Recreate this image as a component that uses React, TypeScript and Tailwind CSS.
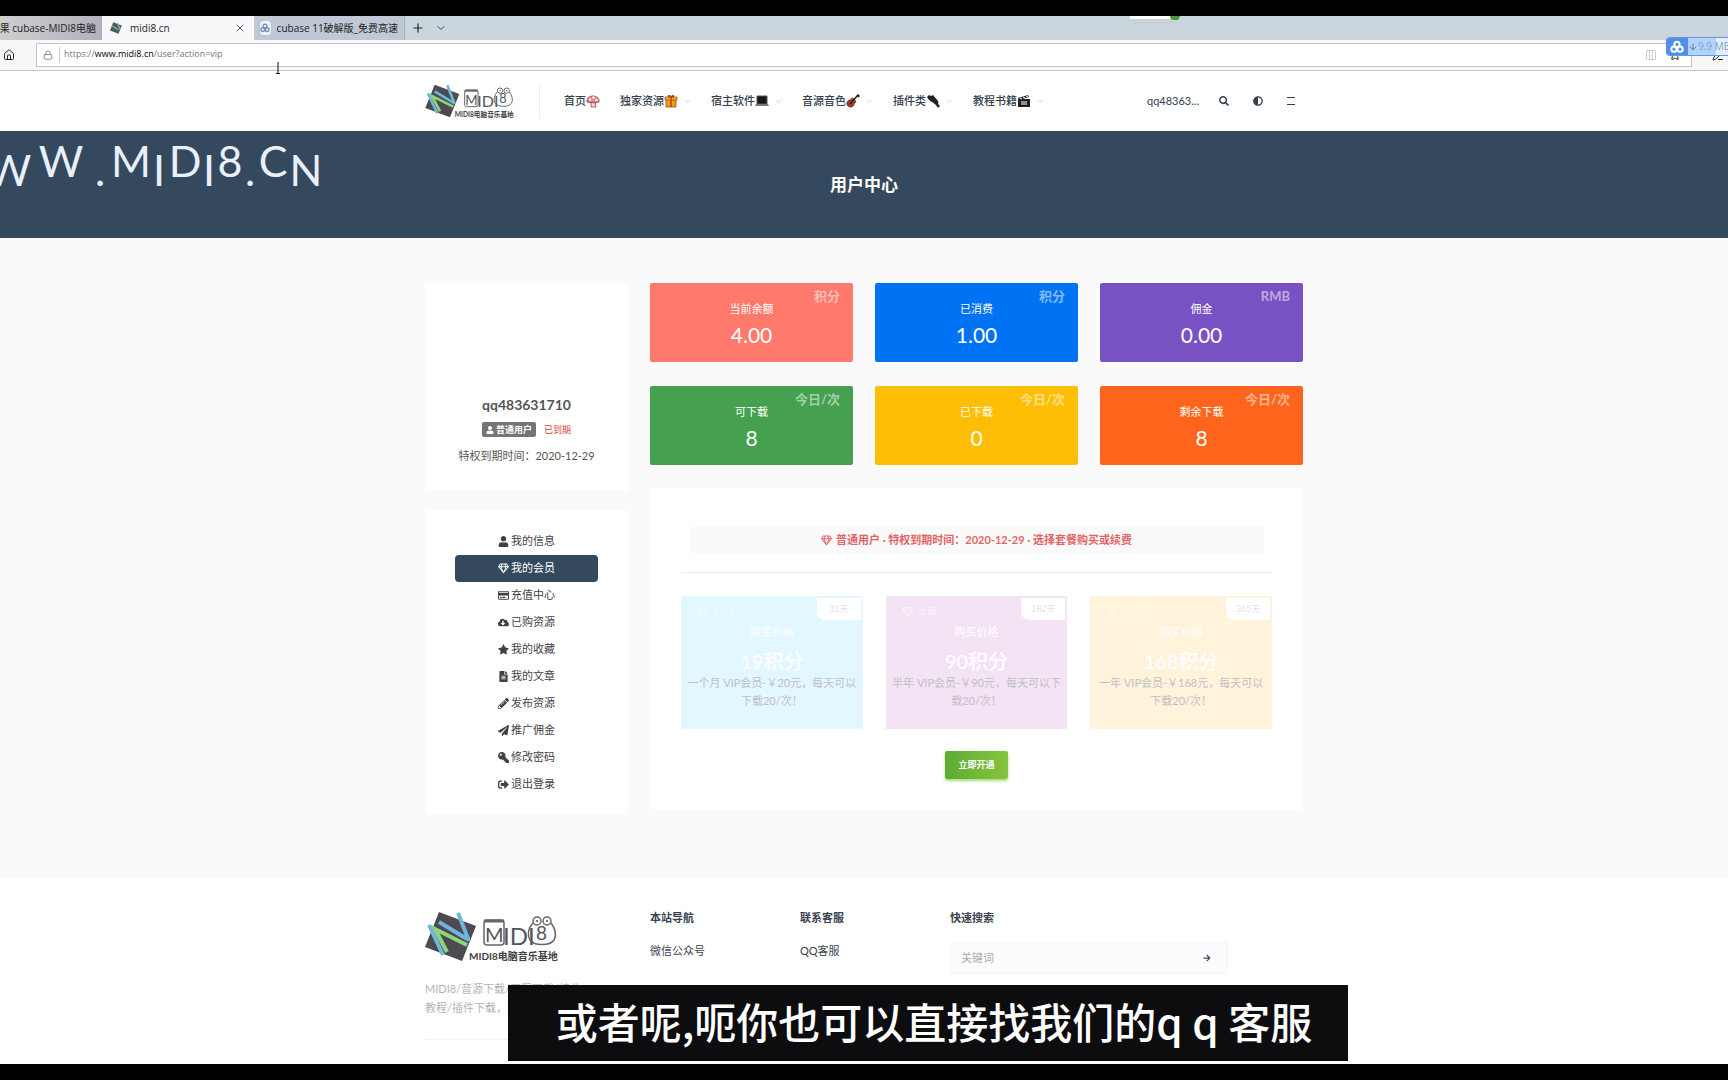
import type { ReactNode } from 'react';
import type { IconType } from 'react-icons';
import {
  FaAdjust,
  FaArrowRight,
  FaCloudDownloadAlt,
  FaFileAlt,
  FaKey,
  FaPaperPlane,
  FaPencilAlt,
  FaRegCreditCard,
  FaRegGem,
  FaSearch,
  FaSignOutAlt,
  FaStar,
  FaUser,
} from 'react-icons/fa';
import { ArrowDown, ChevronDown, Columns3, House, Lock, PenLine, Plus, Star, X } from 'lucide-react';
import clsx from 'clsx';

interface Stat {
  label: string;
  value: string;
  unit: string;
  color: string;
}

interface Plan {
  name: string;
  days: string;
  price: string;
  lines: [string, string];
  color: string;
}

interface MenuItem {
  label: string;
  icon: IconType;
  active?: boolean;
  iconClass?: string;
}

const stats: Stat[] = [
  { label: '当前余额', value: '4.00', unit: '积分', color: 'bg-[#ff7a6c]' },
  { label: '已消费', value: '1.00', unit: '积分', color: 'bg-[#0073f5]' },
  { label: '佣金', value: '0.00', unit: 'RMB', color: 'bg-[#7852c2]' },
  { label: '可下载', value: '8', unit: '今日/次', color: 'bg-[#45a050]' },
  { label: '已下载', value: '0', unit: '今日/次', color: 'bg-[#ffbe06]' },
  { label: '剩余下载', value: '8', unit: '今日/次', color: 'bg-[#ff641c]' },
];

const plans: Plan[] = [
  {
    name: '包月',
    days: '31天',
    price: '19积分',
    lines: ['一个月 VIP会员-￥20元，每天可以', '下载20/次！'],
    color: 'bg-[#e2f7ff]',
  },
  {
    name: '半年',
    days: '182天',
    price: '90积分',
    lines: ['半年 VIP会员-￥90元，每天可以下', '载20/次！'],
    color: 'bg-[#f3e3f4]',
  },
  {
    name: '一年',
    days: '365天',
    price: '168积分',
    lines: ['一年 VIP会员-￥168元，每天可以', '下载20/次！'],
    color: 'bg-[#fff3db]',
  },
];

const menu: MenuItem[] = [
  { label: '我的信息', icon: FaUser },
  { label: '我的会员', icon: FaRegGem, active: true },
  { label: '充值中心', icon: FaRegCreditCard },
  { label: '已购资源', icon: FaCloudDownloadAlt },
  { label: '我的收藏', icon: FaStar },
  { label: '我的文章', icon: FaFileAlt },
  { label: '发布资源', icon: FaPencilAlt },
  { label: '推广佣金', icon: FaPaperPlane },
  { label: '修改密码', icon: FaKey, iconClass: '-scale-x-100' },
  { label: '退出登录', icon: FaSignOutAlt },
];

// letters of the bouncing watermark, every cell has its own width
const watermark = [
  { char: 'W', cell: 'w-[50px]', low: true },
  { char: 'W', cell: 'w-[54px]', low: false },
  { char: '.', cell: 'w-[24px]', low: true },
  { char: 'M', cell: 'w-[38px]', low: false },
  { char: 'I', cell: 'w-[18px]', low: true },
  { char: 'D', cell: 'w-[34px]', low: false },
  { char: 'I', cell: 'w-[14px]', low: true },
  { char: '8', cell: 'w-[28px]', low: false },
  { char: '.', cell: 'w-[12px]', low: true },
  { char: 'C', cell: 'w-[34px]', low: false },
  { char: 'N', cell: 'w-[32px]', low: true },
];

function Logo({ className }: { className: string }) {
  return (
    <svg viewBox="0 0 134 51" className={className} role="img" aria-label="MIDI8">
      <polygon points="14,1 51,15 37,50 0,36" fill="#4d4a52" />
      <g fill="none" strokeWidth="4">
        <path d="M14 11 42 28M33 2l11 28M4 14l14 30" stroke="#6fb7da" />
        <path d="M22 41 10 18l32 16" stroke="#8fd47c" />
      </g>
      <g fill="none" stroke="#66666a" strokeWidth="1.5">
        <rect x="59" y="9" width="20" height="25" rx="3" />
        <path d="M59 10h20" strokeWidth="3" />
        <path d="M108 12c-5 5-6 12-3 17 4 6 20 6 24 0 3-5 1-12-3-17" />
        <circle cx="112" cy="10" r="4" />
        <circle cx="122" cy="10" r="4" />
      </g>
      <circle cx="112" cy="10" r="1" fill="#555" />
      <circle cx="122" cy="10" r="1" fill="#555" />
      <g fill="#55555a" fontFamily="Lato, 'Noto Sans CJK SC', sans-serif">
        <text x="60" y="31" fontSize="20">M</text>
        <text x="78" y="34" fontSize="24">IDI</text>
        <text x="111" y="29" fontSize="19">8</text>
        <text x="44" y="49" fontSize="10" fontWeight="700" fill="#3f3f44">MIDI8电脑音乐基地</text>
      </g>
    </svg>
  );
}

function Glyph({ children }: { children: ReactNode }) {
  return (
    <svg viewBox="0 0 14 14" className="h-3.5 w-3.5" aria-hidden="true">
      {children}
    </svg>
  );
}

const navItems: { label: string; glyph: ReactNode; sub: boolean }[] = [
  {
    label: '首页',
    sub: false,
    glyph: (
      <Glyph>
        <path d="M5 7h4l1 6H5z" fill="#f3d9cf" stroke="#7a3434" strokeWidth=".7" />
        <path d="M1 8c-1-8 13-8 12 0-3 1-9 1-12 0z" fill="#e8838c" stroke="#7a2434" strokeWidth=".7" />
        <circle cx="4" cy="5.500" r="1.200" fill="#fff" />
        <circle cx="7.500" cy="3.500" r="1.200" fill="#fff" />
        <circle cx="10.500" cy="6" r="1.200" fill="#fff" />
      </Glyph>
    ),
  },
  {
    label: '独家资源',
    sub: true,
    glyph: (
      <Glyph>
        <path d="M2 5h10v8H2z" fill="#f59a1c" stroke="#7d4a12" strokeWidth=".7" />
        <path d="M1 3h12v3H1z" fill="#ffb02e" stroke="#7d4a12" strokeWidth=".7" />
        <path d="M7 3v10M7 3C3 3 4 0 7 3c3-3 4 0 0 0" fill="none" stroke="#b3401f" strokeWidth="1.500" />
      </Glyph>
    ),
  },
  {
    label: '宿主软件',
    sub: true,
    glyph: (
      <Glyph>
        <path d="M2 2h10v8H2z" fill="#17171a" stroke="#555" strokeWidth="1" />
        <path d="M1 10h12l1 2H0z" fill="#77777b" />
      </Glyph>
    ),
  },
  {
    label: '音源音色',
    sub: true,
    glyph: (
      <Glyph>
        <path d="M8 5c-2-2-3 0-4 1-3 0-4 4-2 6s6 1 6-2c1-1 3-2 0-5z" fill="#a33d22" stroke="#4a1a10" strokeWidth=".7" />
        <path d="M4 10 12 1l1 1-1 1" fill="none" stroke="#2b1a17" strokeWidth="1.500" />
      </Glyph>
    ),
  },
  {
    label: '插件类',
    sub: true,
    glyph: (
      <Glyph>
        <path d="M1 3 3 1l2 1 2-1 5 6c1 3 0 4-3 3L3 6z" fill="#222226" />
        <path d="M9 8l4 5" stroke="#222226" strokeWidth="2.500" />
      </Glyph>
    ),
  },
  {
    label: '教程书籍',
    sub: true,
    glyph: (
      <Glyph>
        <path d="M1 5h12v8H1z" fill="#1f1f23" />
        <path d="M1 4 11 1l1 2L2 6z" fill="#1f1f23" />
        <path d="M3 4l2 1M6 3l2 1M9 2l2 1M4 8h6M4 10h6" stroke="#fff" strokeWidth="1" />
      </Glyph>
    ),
  },
];

function CloudIcon({ className }: { className: string }) {
  return (
    <svg viewBox="0 0 16 16" className={className} fill="none" stroke="currentColor" strokeWidth="2.200" aria-hidden="true">
      <circle cx="8" cy="5" r="3" />
      <circle cx="4.500" cy="10.500" r="3" />
      <circle cx="11.500" cy="10.500" r="3" />
    </svg>
  );
}

function BrowserChrome() {
  return (
    <div className="relative font-['Open_Sans','Noto_Sans_CJK_SC',sans-serif] text-[#222]">
      <div className="flex h-6 items-stretch overflow-hidden bg-[#cad5dd] text-[10px] leading-6">
        <div className="flex w-[102px] shrink-0 justify-end overflow-hidden bg-linear-to-r from-[#cfcfd0] to-[#b2b1bd] pr-1.5 whitespace-nowrap">
          结果 cubase-MIDI8电脑
        </div>
        <div className="flex w-[152px] shrink-0 items-center gap-2 bg-[#f8f8fa] px-2">
          <svg viewBox="0 0 52 51" className="h-3 w-3" aria-hidden="true">
            <polygon points="14,1 51,15 37,50 0,36" fill="#4d5a5c" />
            <path d="M8 16l30 18M33 4l10 26" stroke="#7fbfae" strokeWidth="5" />
          </svg>
          <span className="flex-1">midi8.cn</span>
          <button type="button" aria-label="关闭标签页">
            <X className="h-3 w-3" strokeWidth={1.5} />
          </button>
        </div>
        <div className="flex w-[151px] shrink-0 items-center gap-1.5 border-r border-[#a9b3bd] bg-[#bfc8d4] px-1.5 whitespace-nowrap">
          <span className="flex h-3.5 w-3.5 items-center justify-center rounded-sm bg-[#eef3fa] text-[#7590b4]">
            <CloudIcon className="h-2.5 w-2.5" />
          </span>
          cubase 11破解版_免费高速
        </div>
        <button type="button" className="ml-1.5" aria-label="新建标签页">
          <Plus className="h-3.5 w-3.5" strokeWidth={2} />
        </button>
        <button type="button" className="ml-2.5" aria-label="标签页列表">
          <ChevronDown className="h-3 w-3" strokeWidth={1.5} />
        </button>
      </div>
      <div className="flex h-[31px] items-center border-b border-[#c8c8ca] bg-[#f7f7f8]">
        <button type="button" className="flex w-9 justify-start pl-[3px]" aria-label="主页">
          <House className="h-3 w-3" strokeWidth={2} />
        </button>
        <div className="flex h-6 flex-1 items-center border border-[#c4c4c8] bg-white">
          <Lock className="mx-1.5 h-2.5 w-2.5 text-[#777]" />
          <div className="flex h-4 flex-1 items-center border-l border-[#ccc] pb-0.5 pl-1 text-[9px] leading-4 text-[#777]">
            <span>
              https://<span className="text-black">www.midi8.cn</span>/user?action=vip
            </span>
          </div>
          <Columns3 className="mr-3 h-3 w-3 text-[#bbb]" strokeWidth={1.5} />
          <Star className="mr-2.5 h-3 w-3" />
        </div>
        <PenLine className="mr-1 ml-5 h-3 w-3" />
      </div>
      {/* floating download monitor */}
      <div className="absolute top-[21px] right-0 flex h-[19px] w-[62px] items-center overflow-hidden rounded-l border-y border-[#5f9ae8] bg-linear-to-r from-[#b5d2fc] from-80% to-[#e4effd] to-80% text-[10px] whitespace-nowrap text-[#7e9fcd]">
        <span className="flex h-full w-[22px] shrink-0 items-center justify-center bg-[#4f8fe6] text-white">
          <CloudIcon className="h-3.5 w-3.5" />
        </span>
        <ArrowDown className="h-2.5 w-2.5 shrink-0 text-[#3c6db5]" />
        9.9 MB
      </div>
      <div className="absolute top-0 right-[548px] flex h-[3px] w-[50px] justify-end bg-white shadow-md">
        <span className="h-1 w-2.5 rounded-b-full bg-[#4a9a3a]" />
      </div>
      {/* text cursor */}
      <svg viewBox="0 0 6 12" className="absolute top-[46px] left-[275px] h-3 w-1.5" aria-hidden="true">
        <path d="M3 0v11M1 11.500h4" stroke="#111" strokeWidth="1" />
      </svg>
    </div>
  );
}

function SiteHeader() {
  return (
    <header className="bg-white">
      <div className="mx-auto flex h-[60px] w-full max-w-[878px] items-center text-[11px] text-[#34404e]">
        <a href="#home" className="border-r border-[#eee] pr-6">
          <Logo className="h-[34px] w-[90px]" />
        </a>
        <nav className="ml-6 flex flex-1 items-center gap-5 font-medium">
          {navItems.map((item) => (
            <a key={item.label} href="#nav" className="flex items-center whitespace-nowrap">
              {item.label}
              {item.glyph}
              {item.sub && <ChevronDown className="ml-1.5 h-[7px] w-[7px] text-[#aaa]" />}
            </a>
          ))}
        </nav>
        <div className="flex items-center gap-6 pr-2">
          <a href="#user" className="-mr-1">
            qq48363...
          </a>
          <button type="button" aria-label="搜索">
            <FaSearch className="h-2.5 w-2.5" />
          </button>
          <button type="button" aria-label="夜间模式">
            <FaAdjust className="h-2.5 w-2.5" />
          </button>
          <button type="button" className="h-2 w-2 border-y border-[#34404e]" aria-label="菜单" />
        </div>
      </div>
    </header>
  );
}

function Banner() {
  return (
    <section className="relative flex h-[107px] items-center justify-center overflow-hidden bg-[#34495e]">
      <h1 className="text-[17px] font-bold text-white">用户中心</h1>
      <div className="absolute top-0 -left-4 flex text-[43px] leading-[60px] text-[#e9f0fb]" aria-label="WWW.MIDI8.CN">
        {watermark.map((letter, i) => (
          <span key={i} className={clsx('flex shrink-0 justify-center', letter.cell, letter.low && 'pt-[9px]')}>
            {letter.char}
          </span>
        ))}
      </div>
    </section>
  );
}

function Sidebar() {
  return (
    <aside className="flex w-[203px] shrink-0 flex-col gap-5">
      <section className="bg-white pt-28 pb-[25px] text-center text-[#555]">
        <h2 className="text-sm font-bold">qq483631710</h2>
        <p className="mt-[7px] flex h-[15px] items-center justify-center gap-2 text-[9px]">
          <span className="flex h-full items-center gap-0.5 rounded-xs bg-[#757575] px-1 font-bold text-white">
            <FaUser className="h-2 w-2" />
            普通用户
          </span>
          <span className="text-[#d9403a]">已到期</span>
        </p>
        <p className="mt-[9px] text-[11px] leading-5">特权到期时间：2020-12-29</p>
      </section>
      <nav className="bg-white px-[30px] py-[17px]">
        {menu.map(({ label, icon: Icon, active, iconClass }) => (
          <a
            key={label}
            href="#menu"
            className={clsx(
              'flex h-[27px] items-center justify-center gap-0.5 text-[11px]',
              active ? 'rounded-sm bg-[#34495e] text-white' : 'text-[#3f4347]',
            )}
          >
            <Icon className={clsx('h-[11px]', iconClass)} />
            {label}
          </a>
        ))}
      </nav>
    </aside>
  );
}

function StatCard({ stat }: { stat: Stat }) {
  return (
    <div className={clsx('relative flex h-[79px] flex-col items-center rounded-xs pt-[17px] text-white', stat.color)}>
      <span className="absolute top-[3px] right-[13px] text-[13px] leading-5 font-bold opacity-50">{stat.unit}</span>
      <span className="text-[11px] leading-[18px]">{stat.label}</span>
      <span className="mt-[3px] text-[21px] leading-7">{stat.value}</span>
    </div>
  );
}

function PlanCard({ plan }: { plan: Plan }) {
  return (
    <label className={clsx('relative flex h-[133px] flex-col items-center pt-[27px] text-white', plan.color)}>
      <input type="radio" name="plan" className="sr-only" />
      <span className="absolute top-2 left-4 flex items-center gap-1 text-[11px] leading-4 opacity-50">
        <FaRegGem className="h-2.5" />
        {plan.name}
      </span>
      <span className="absolute top-0.5 right-0.5 flex h-[22px] w-[44px] items-center justify-center rounded-bl-lg bg-white text-[9px] text-[#e4e4e6]">
        {plan.days}
      </span>
      <span className="text-[11px] leading-[18px]">购买价格</span>
      <strong className="mt-1.5 text-xl leading-7 font-medium">{plan.price}</strong>
      <span className="-mt-px text-[11px] leading-[18px] whitespace-nowrap text-[#bfc0c4]">{plan.lines[0]}</span>
      <span className="text-[11px] leading-[18px] text-[#bfc0c4]">{plan.lines[1]}</span>
    </label>
  );
}

function VipPanel() {
  return (
    <section className="flex flex-col items-center bg-white px-[31px] pt-[39px] pb-[30px]">
      <p className="flex h-[26px] w-[574px] max-w-full items-center justify-center gap-1 bg-[#fafafb] text-[11px] font-bold text-[#e26464]">
        <FaRegGem className="h-[11px]" />
        普通用户 · 特权到期时间：2020-12-29 · 选择套餐购买或续费
      </p>
      <hr className="mt-[19px] w-full border-[#ececee]" />
      <div className="mt-[23px] grid w-full grid-cols-3 gap-[23px]">
        {plans.map((plan) => (
          <PlanCard key={plan.name} plan={plan} />
        ))}
      </div>
      <button
        type="button"
        className="mt-[22px] h-7 w-[63px] rounded-xs bg-linear-to-r from-[#5dac33] to-[#86c440] text-[9px] font-bold text-white shadow-[0_2px_3px_#a5dc7c]"
      >
        立即开通
      </button>
    </section>
  );
}

function SiteFooter() {
  return (
    <footer className="flex-1 bg-white pt-[31px]">
      <div className="mx-auto w-full max-w-[878px] text-[11px]">
        <div className="flex border-b border-[#f3f3f3] pb-[22px]">
          <div className="w-[203px] text-[#b4b4b6]">
            <Logo className="mt-px h-[51px] w-[134px]" />
            <p className="mt-[17px] leading-[19px]">
              MIDI8/音源下载/工程下载/编曲
              <br />
              教程/插件下载，Beat下载
            </p>
          </div>
          <div className="ml-[22px] w-[150px] text-[#3a4350]">
            <h3 className="leading-4 font-bold">本站导航</h3>
            <a href="#wechat" className="mt-[17px] block leading-4">
              微信公众号
            </a>
          </div>
          <div className="w-[150px] text-[#3a4350]">
            <h3 className="leading-4 font-bold">联系客服</h3>
            <a href="#qq" className="mt-[17px] block leading-4">
              QQ客服
            </a>
          </div>
          <div className="w-[278px] text-[#3a4350]">
            <h3 className="leading-4 font-bold">快速搜索</h3>
            <form className="mt-4 flex h-8 items-center rounded-xs border border-[#f5f5f8] bg-[#fcfcfe] pr-4">
              <input
                type="search"
                aria-label="关键词"
                placeholder="关键词"
                className="min-w-0 flex-1 bg-transparent px-2.5 outline-none placeholder:text-[#aaa]"
              />
              <button type="submit" aria-label="搜索">
                <FaArrowRight className="h-2 w-2" />
              </button>
            </form>
          </div>
        </div>
      </div>
    </footer>
  );
}

export default function App() {
  return (
    <div className="relative flex min-h-screen flex-col border-y-16 border-black bg-[#fafafa] font-[Lato,'Noto_Sans_CJK_SC',sans-serif]">
      <BrowserChrome />
      <SiteHeader />
      <Banner />
      <main className="mx-auto flex w-full max-w-[878px] items-start gap-[22px] pt-[45px] pb-16">
        <Sidebar />
        <div className="min-w-0 flex-1">
          <div className="grid grid-cols-3 gap-x-[22px] gap-y-6">
            {stats.map((stat) => (
              <StatCard key={stat.label} stat={stat} />
            ))}
          </div>
          <div className="mt-[23px]">
            <VipPanel />
          </div>
        </div>
      </main>
      <SiteFooter />
      {/* video subtitle */}
      <p className="absolute bottom-[3px] left-[508px] flex h-[76px] w-[840px] items-center justify-center bg-[#0d0c0f] pb-1.5 pl-3 font-['Noto_Sans_CJK_SC',sans-serif] text-[42px] font-medium whitespace-nowrap text-white">
        或者呢,呃你也可以直接找我们的q q 客服
      </p>
    </div>
  );
}
